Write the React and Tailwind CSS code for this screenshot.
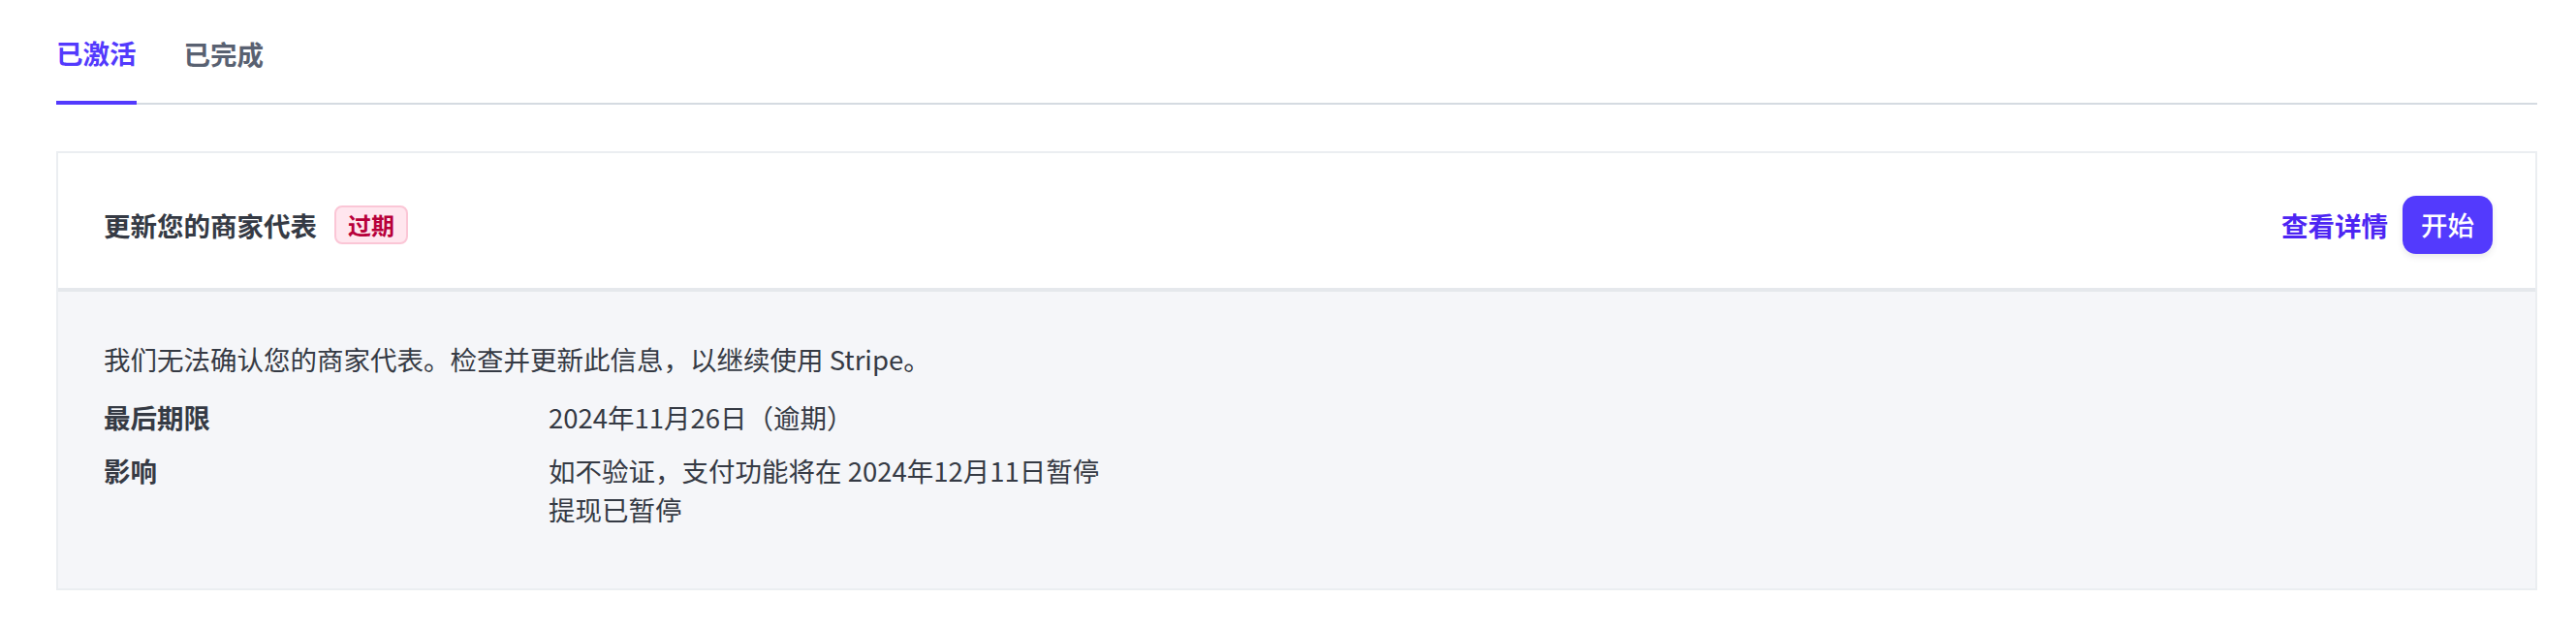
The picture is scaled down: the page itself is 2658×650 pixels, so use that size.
import React from "react";

const font = { fontFamily: '"Noto Sans CJK SC", "Noto Sans", sans-serif' };

const rows = [
  { label: "最后期限", value: ["2024年11月26日（逾期）"] },
  { label: "影响", value: ["如不验证，支付功能将在 2024年12月11日暂停", "提现已暂停"] },
];

const App = () => {
  return (
    <div className="bg-white min-h-[650px] pl-[58px] pr-[40px] pt-[34px] text-[27.5px] text-[#353a44]" style={font}>
      <div className="flex gap-[49px] border-b-2 border-[#d5dbe1]">
        <button className="leading-[40px] pb-[30px] font-semibold text-[#533afd] border-b-4 border-[#533afd] -mb-[2px]">
          已激活
        </button>
        <button className="leading-[40px] pb-[30px] font-semibold text-[#596171]">已完成</button>
      </div>

      <div className="mt-[48px] border-2 border-[#ebeef1]">
        <div className="flex items-center justify-between pt-[44px] pb-[35px] pl-[47px] pr-[44px] border-b-4 border-[#e5e8ec]">
          <div className="flex items-center gap-[18px]">
            <span className="font-semibold leading-[40px]">更新您的商家代表</span>
            <span className="h-[40px] px-[12px] flex items-center rounded-[8px] border-2 border-[#fbc6d6] bg-[#ffe6ee] text-[#b8003a] font-semibold text-[24px] leading-none">
              过期
            </span>
          </div>
          <div className="flex items-center gap-[15px]">
            <a className="font-semibold text-[#4d25f3] leading-[40px]">查看详情</a>
            <button className="h-[60px] px-[19px] rounded-[14px] bg-[#533afd] text-white font-medium shadow-[0_3px_6px_rgba(64,68,82,0.12)]">
              开始
            </button>
          </div>
        </div>

        <div className="bg-[#f5f6f9] pt-[49px] pb-[62px] pl-[47px] pr-[44px] leading-[40px]">
          <p className="mb-[20px]">我们无法确认您的商家代表。检查并更新此信息，以继续使用 Stripe。</p>
          <div className="flex flex-col gap-[15px]">
            {rows.map((r) => (
              <div key={r.label} className="flex">
                <div className="w-[459px] shrink-0 font-semibold">{r.label}</div>
                <div>
                  {r.value.map((v) => (
                    <div key={v}>{v}</div>
                  ))}
                </div>
              </div>
            ))}
          </div>
        </div>
      </div>
    </div>
  );
};

export default App;
